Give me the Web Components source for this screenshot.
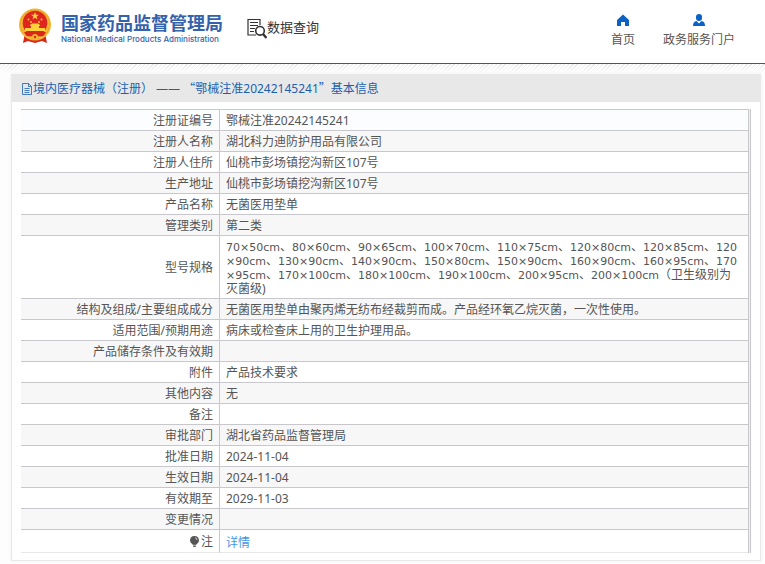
<!DOCTYPE html>
<html lang="zh-CN">
<head>
<meta charset="utf-8">
<title>国家药品监督管理局 数据查询</title>
<style>
html { background: #fdfdfd; }
body { margin: 0; font: 12px/14px "Noto Sans", "Noto Sans CJK SC", sans-serif; color: #555; }
.quote { font-family: "Noto Sans CJK SC", sans-serif; line-height: 0; }
</style>
</head>
<body>
<nmpa-page>
  <nmpa-header slot="header">
    <nmpa-brand slot="brand"></nmpa-brand>
    <data-query slot="brand">数据查询</data-query>
    <nav-item slot="nav" icon="home">首页</nav-item>
    <nav-item slot="nav" icon="user">政务服务门户</nav-item>
  </nmpa-header>
  <info-panel>
    <span slot="title">境内医疗器械（注册） —— <span class="quote">“</span>鄂械注准20242145241<span class="quote">”</span>基本信息</span>
    <record-table></record-table>
  </info-panel>
</nmpa-page>
<script>
const define = (name, html, setup) => customElements.define(name, class extends HTMLElement {
  constructor() {
    super();
    const t = document.createElement('template');
    t.innerHTML = html;
    this.attachShadow({ mode: 'open' }).append(t.content.cloneNode(true));
  }
  connectedCallback() { if (setup) setup(this, this.shadowRoot); }
});

define('nmpa-page', `
<style>
:host { display: block; }
main {
  padding: 10px 4px 3px 11px;
  background:
    linear-gradient(transparent, #fdfdfd 9px),
    repeating-linear-gradient(135deg, #e6e6e6 0 1px, #fdfdfd 1px 3px);
}
</style>
<slot name="header"></slot>
<main><slot></slot></main>`);

define('nmpa-header', `
<style>
:host { display: block; background: #fff; border-bottom: 1px solid #1f6391; }
header { display: flex; justify-content: space-between; align-items: flex-start; height: 63px; }
.brand { display: flex; padding: 8px 0 0 18px; }
nav { display: flex; gap: 28px; padding: 14px 30px 0 0; }
</style>
<header>
  <div class="brand"><slot name="brand"></slot></div>
  <nav aria-label="主导航"><slot name="nav"></slot></nav>
</header>`);

define('nmpa-brand', `
<style>
:host { display: block; }
a { display: flex; gap: 9px; color: #3462ab; text-decoration: none; }
svg { width: 34px; height: 36px; }
.names { display: flex; flex-direction: column; padding-top: 4px; }
strong { font: 700 18px/21px "Noto Sans CJK SC", sans-serif; }
small { font: 500 8px/12px Inter, sans-serif; }
</style>
<a href="#" aria-label="国家药品监督管理局">
  <svg viewBox="0 0 34 36" aria-hidden="true">
    <path d="M7 25 5 35l5-2 7 2 7-2 5 2-2-10z" fill="#d9271c"/>
    <circle cx="17" cy="16.500" r="16" fill="#f3b630"/>
    <circle cx="17" cy="16.500" r="14.500" fill="none" stroke="#e09b28" stroke-width=".8" stroke-dasharray="2 1.500"/>
    <circle cx="17" cy="15" r="12.300" fill="#df261e"/>
    <path d="m17 4 1 2.800h3l-2.400 1.800.9 2.900L17 9.800l-2.500 1.700.9-2.900L13 6.800h3z" fill="#ffd23c"/>
    <g fill="#ffd23c"><circle cx="10.500" cy="11.500" r=".9"/><circle cx="13" cy="14" r=".9"/><circle cx="21" cy="14" r=".9"/><circle cx="23.500" cy="11.500" r=".9"/>
    <path d="m12 17 2-1.500h6l2 1.500v1H12zM13 18h8v2h-8zM7 20h20v3H7z"/></g>
    <path d="M6 24h22l-3 5H9z" fill="#d9271c"/>
    <path d="M7 27q5 3 10 0 5 3 10 0l-2 3q-4 1-8-1-4 2-8 1z" fill="#f6c33b"/>
    <circle cx="17" cy="29" r="3" fill="#f3b630"/><circle cx="17" cy="29" r="1.200" fill="#d9271c"/>
  </svg>
  <span class="names"><strong>国家药品监督管理局</strong><small>National Medical Products Administration</small></span>
</a>`);

define('data-query', `
<style>
:host { display: flex; align-items: flex-start; padding: 10px 0 0 24px; font-size: 13px; line-height: 18px; color: #333; }
svg { width: 20px; height: 21px; }
</style>
<svg viewBox="0 0 20 21" fill="none" stroke="#333" aria-hidden="true">
  <path d="M13 7V1.500H1V17h8" stroke-width="1.200"/>
  <path d="M3 4.500h8M3 7.500h8M3 10.500h5M3 13.500h4" stroke-width="1"/>
  <circle cx="13" cy="12.800" r="4.300" stroke-width="1.600"/>
  <path d="m16 16 3.500 4" stroke-width="2.400"/>
</svg><slot></slot>`);

define('nav-item', `
<style>
:host { display: block; }
a { display: flex; flex-direction: column; align-items: center; gap: 6px; color: #555; text-decoration: none; }
svg { width: 12px; height: 12px; fill: #0b62c4; }
span { line-height: 16px; }
</style>
<a href="#"><svg viewBox="0 0 12 12" aria-hidden="true"><path/></svg><span><slot></slot></span></a>`,
(host, root) => root.querySelector('path').setAttribute('d', {
  home: 'M6 .5 0 6v6h4V8h4v4h4V6z',
  user: 'M6 0a3 3 0 0 1 3 3v1a3 3 0 0 1-6 0V3a3 3 0 0 1 3-3zM3.500 7 6 9.500 8.500 7Q12 7.500 12 12H0q0-4.500 3.500-5z'
}[host.getAttribute('icon')]));

define('info-panel', `
<style>
:host { display: block; border: 1px solid #e8e8e8; background: #fff; box-shadow: 0 0 3px #eee; }
h1 { display: flex; align-items: center; margin: 0; padding: 0 10px; background: #e8e8e8; color: #1b5faf; font-size: 12px; font-weight: 400; line-height: 27px; }
svg { width: 11px; height: 12px; }
.body { padding: 7px 9px; }
</style>
<h1><svg viewBox="0 0 11 12" fill="none" stroke="#1b5faf" aria-hidden="true"><path d="M.5.5h6l3 3v8h-9zM6.500.5v3h3M2.500 5.500h5M2.500 7.500h5M2.500 9.500h5" stroke-width=".8"/></svg><slot name="title"></slot></h1>
<div class="body"><slot></slot></div>`);

const records = [
  ['注册证编号', '鄂械注准20242145241'],
  ['注册人名称', '湖北科力迪防护用品有限公司'],
  ['注册人住所', '仙桃市彭场镇挖沟新区107号'],
  ['生产地址', '仙桃市彭场镇挖沟新区107号'],
  ['产品名称', '无菌医用垫单'],
  ['管理类别', '第二类'],
  ['型号规格', '70×50cm、80×60cm、90×65cm、100×70cm、110×75cm、120×80cm、120×85cm、120<br>×90cm、130×90cm、140×90cm、150×80cm、150×90cm、160×90cm、160×95cm、170<br>×95cm、170×100cm、180×100cm、190×100cm、200×95cm、200×100cm（卫生级别为<br>灭菌级)'],
  ['结构及组成/主要组成成分', '无菌医用垫单由聚丙烯无纺布经裁剪而成。产品经环氧乙烷灭菌，一次性使用。'],
  ['适用范围/预期用途', '病床或检查床上用的卫生护理用品。'],
  ['产品储存条件及有效期', ''],
  ['附件', '产品技术要求'],
  ['其他内容', '无'],
  ['备注', ''],
  ['审批部门', '湖北省药品监督管理局'],
  ['批准日期', '2024-11-04'],
  ['生效日期', '2024-11-04'],
  ['有效期至', '2029-11-03'],
  ['变更情况', '']
];

define('record-table', `
<style>
:host { display: block; border-right: 1px solid #c8c8cc; padding-right: 1px; background: #f0f0f2; }
table { width: 100%; table-layout: fixed; border-collapse: separate; border-spacing: 0; border-right: 1px solid #c8c8cc; background: #fff; }
col.label { width: 199px; }
th, td { height: 14px; padding: 4px 6px 2px; border-top: 1px solid #c8c8cc; font-weight: 400; vertical-align: middle; }
th { text-align: right; border-right: 1px solid #c8c8cc; }
td { text-align: left; }
.size { font: 11px/0 "DejaVu Sans", sans-serif; }
tr:nth-child(even) { background: #f7f7f7; }
tr:first-child { background: #fbfdff; }
tr:last-child { background: #fff; }
tr:last-child > * { height: 16px; border-bottom: 1px solid #e8e8e8; }
tr:last-child > td { padding-top: 5px; padding-bottom: 1px; }
a { color: #4495e8; text-decoration: none; }
svg { width: 9px; height: 11px; margin-right: 2px; vertical-align: -1px; }
</style>
<table><colgroup><col class="label"><col></colgroup><tbody></tbody></table>`,
(host, root) => {
  const sizes = v => v.replace(/\d*×\d+cm|\d+(?=<br>)/g, '<span class="size">$&</span>');
  const rows = records.map(([k, v]) => `<tr><th scope="row">${k}</th><td>${sizes(v)}</td></tr>`);
  rows.push(`<tr><th scope="row"><svg viewBox="0 0 9 11" aria-hidden="true"><path d="M4.500 0a4.300 4.300 0 0 1 2.300 8L6 9v1.500L5 11H4l-1-.5V9l-.8-1A4.300 4.300 0 0 1 4.500 0z" fill="#555"/><path d="M5 1.700q2 .3 2 2.300M3 9.300h3" stroke="#fff" fill="none" stroke-width=".7"/></svg>注</th><td><a href="#">详情</a></td></tr>`);
  root.querySelector('tbody').innerHTML = rows.join('');
});
</script>
</body>
</html>
